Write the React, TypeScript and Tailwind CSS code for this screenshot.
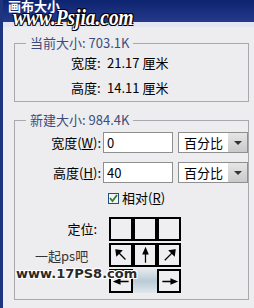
import React from 'react';

const cjk = { fontFamily: '"Noto Sans CJK SC", "Liberation Sans", sans-serif' };

type Dir = 'nw' | 'n' | 'ne' | 'w' | 'e' | null;

const arrowPaths: Record<Exclude<Dir, null>, string> = {
    nw: 'M17 17 L7 7 M5 5 L6 12 L12 6 Z',
    n: 'M12 21 L12 7 M12 3 L9 10 L15 10 Z',
    ne: 'M6 18 L16 8 M19 5 L12 6 L18 12 Z',
    w: 'M21 12 L8 12 M3 12 L10 9 L10 15 Z',
    e: 'M3 12 L16 12 M21 12 L14 9 L14 15 Z',
};

const AnchorCell: React.FC<{ dir?: Dir; center?: boolean }> = ({ dir, center }) => {
    if (center) {
        return <div className="w-[24px] h-[24px] shrink-0 bg-gradient-to-b from-[#e4eaee] via-[#b9cbd6] to-[#dfe7ec]"></div>;
    }
    return (
        <div className="w-[24px] h-[24px] shrink-0 border-2 border-black bg-[#efeef1] flex items-center justify-center">
            {dir && (
                <svg width="19" height="19" viewBox="0 0 24 24" className="text-black">
                    <path d={arrowPaths[dir]} stroke="currentColor" strokeWidth="1.6" fill="currentColor" />
                </svg>
            )}
        </div>
    );
};

const UnitSelect: React.FC = () => (
    <div className="w-[70px] h-[21px] bg-white border border-[#8e8f8f] flex items-center">
        <span className="flex-1 pl-[5px] text-[13px] text-black leading-none">百分比</span>
        <div className="w-[19px] h-[19px] bg-gradient-to-b from-[#e6e6e6] to-[#c9c9c9] flex items-center justify-center">
            <div className="w-0 h-0 border-l-[4px] border-r-[4px] border-t-[4px] border-l-transparent border-r-transparent border-t-[#333]"></div>
        </div>
    </div>
);

export default function App() {
    return (
        <div className="relative w-[254px] h-[308px] overflow-hidden bg-[#edecef] border-l-[3px] border-[#1d347f] text-[12px] text-black" style={cjk}>
            {/* title bar */}
            <div className="h-[22px] bg-gradient-to-b from-[#0d2470] to-[#25398a] flex items-start pl-[5px]">
                <span className="text-white font-bold text-[13px] leading-none -mt-[1px]">画布大小</span>
            </div>
            <div className="h-[5px] bg-[#e3e5f2]"></div>

            {/* current size */}
            <fieldset className="ml-[11px] mr-[5px] mt-[9px] border border-[#a9a9ad] h-[66px]">
                <legend className="ml-[11px] px-[4px] text-[#3b4c7c] text-[13px] leading-[14px]">当前大小: 703.1K</legend>
                <div className="flex flex-col pl-[56px] pt-[6px] gap-[11px] text-[13px] leading-[14px]">
                    <div className="flex">
                        <span className="w-[36px]">宽度:</span>
                        <span>21.17 厘米</span>
                    </div>
                    <div className="flex">
                        <span className="w-[36px]">高度:</span>
                        <span>14.11 厘米</span>
                    </div>
                </div>
            </fieldset>

            {/* new size */}
            <fieldset className="ml-[11px] mr-[5px] mt-[11px] border border-[#a9a9ad] pb-[6px]">
                <legend className="ml-[11px] px-[4px] text-[#3b4c7c] text-[13px] leading-[14px]">新建大小: 984.4K</legend>
                <div className="flex flex-col pt-[5px] text-[13px]">
                    <div className="flex items-center h-[21px] shrink-0">
                        <span className="w-[87px] text-right pr-[1px]">宽度(<span className="underline">W</span>):</span>
                        <div className="ml-[1px] w-[70px] h-[21px] bg-white border border-[#8e8f8f] pl-[3px] leading-[19px]">0</div>
                        <div className="ml-[5px]"><UnitSelect /></div>
                    </div>
                    <div className="flex items-center h-[21px] mt-[9px] shrink-0">
                        <span className="w-[87px] text-right pr-[1px]">高度(<span className="underline">H</span>):</span>
                        <div className="ml-[1px] w-[70px] h-[21px] bg-white border border-[#8e8f8f] pl-[3px] leading-[19px]">40</div>
                        <div className="ml-[5px]"><UnitSelect /></div>
                    </div>
                    <div className="flex items-center h-[14px] mt-[8px] pl-[93px] shrink-0">
                        <div className="w-[11px] h-[11px] border border-[#1c5180] bg-[#f3f4f6] flex items-center justify-center">
                            <svg width="9" height="9" viewBox="0 0 9 9">
                                <path d="M1 4 L3.5 7 L8 1" stroke="#3a7a2a" strokeWidth="1.8" fill="none" />
                            </svg>
                        </div>
                        <span className="ml-[3px]">相对(<span className="underline">R</span>)</span>
                    </div>
                    <div className="flex mt-[12px] shrink-0">
                        <span className="w-[94px] text-right pr-[12px] pt-[5px] leading-[14px]">定位:</span>
                        <div className="grid grid-cols-[24px_24px_24px] gap-x-0 gap-y-[2px] shrink-0">
                            <AnchorCell />
                            <AnchorCell />
                            <AnchorCell />
                            <AnchorCell dir="nw" />
                            <AnchorCell dir="n" />
                            <AnchorCell dir="ne" />
                            <AnchorCell dir="w" />
                            <AnchorCell center />
                            <AnchorCell dir="e" />
                        </div>
                    </div>
                </div>
            </fieldset>

            {/* watermarks */}
            <div
                className="absolute left-[10px] top-[6px] text-white italic font-bold text-[23px] leading-none origin-left scale-x-[0.84]"
                style={{ fontFamily: '"Liberation Serif", serif', textShadow: '1px 1px 0 #000, -1px -1px 0 #000, 1px -1px 0 #000, -1px 1px 0 #000' }}
            >
                www.Psjia.com
            </div>
            <div className="absolute left-[32px] top-[249px] text-[#333] text-[13px] leading-none">一起ps吧</div>
            <div
                className="absolute left-[13px] top-[267px] text-[#2a2a2a] font-black text-[13px] leading-none"
                style={{ fontFamily: '"DejaVu Sans", sans-serif', textShadow: '1px 1px 0 #fff, -1px -1px 0 #fff, 1px -1px 0 #fff, -1px 1px 0 #fff' }}
            >
                www.17PS8.com
            </div>
        </div>
    );
}
